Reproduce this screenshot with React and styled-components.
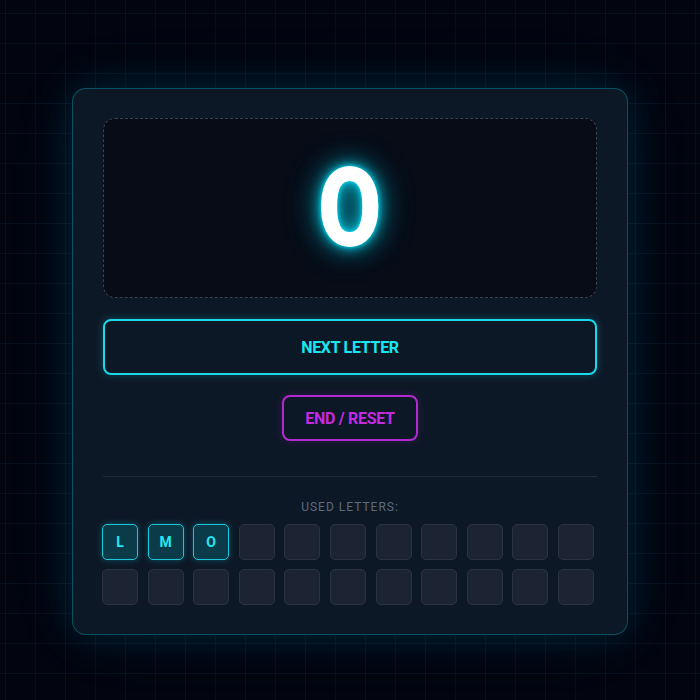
import React from "react";
import styled, { createGlobalStyle } from "styled-components";

const Global = createGlobalStyle`
  html, body { margin: 0; padding: 0; background: #020510; }
  body { font-family: Roboto, "Noto Sans", sans-serif; }
`;

const Page = styled.div`
  width: 700px;
  height: 700px;
  box-sizing: border-box;
  padding-top: 88px;
  display: flex;
  justify-content: center;
  align-items: flex-start;
  background-color: #020510;
  background-image:
    linear-gradient(rgba(40, 90, 130, 0.12) 1px, transparent 1px),
    linear-gradient(90deg, rgba(40, 90, 130, 0.12) 1px, transparent 1px);
  background-size: 30px 30px;
  background-position: 5px 13px;
`;

const Card = styled.div`
  width: 556px;
  box-sizing: border-box;
  padding: 29px 30px 29px;
  background: #0d1826;
  border: 1px solid rgba(0, 200, 230, 0.32);
  border-radius: 14px;
  box-shadow: 0 0 40px rgba(0, 200, 230, 0.15), 0 0 80px rgba(0, 150, 200, 0.06);
  display: flex;
  flex-direction: column;
`;

const Display = styled.div`
  height: 180px;
  box-sizing: border-box;
  border: 1.5px dashed #3a4451;
  border-radius: 12px;
  background: #070c17;
  display: flex;
  align-items: center;
  justify-content: center;
`;

const BigLetter = styled.span`
  font-family: Roboto, sans-serif;
  font-weight: 900;
  font-size: 112px;
  line-height: 1;
  color: #ffffff;
  display: inline-block;
  transform: scaleX(0.82);
  text-shadow: 0 0 6px rgba(0, 229, 255, 0.95), 0 0 14px rgba(0, 229, 255, 0.8),
    0 0 28px rgba(0, 229, 255, 0.55), 0 0 44px rgba(0, 229, 255, 0.3);
`;

const NextButton = styled.button`
  margin-top: 21px;
  height: 56px;
  width: 100%;
  box-sizing: border-box;
  background: transparent;
  border: 2px solid #1ad9e8;
  border-radius: 8px;
  color: #18e6f2;
  font-family: Roboto, sans-serif;
  font-weight: 700;
  font-size: 16px;
  letter-spacing: -0.3px;
  box-shadow: 0 0 8px rgba(0, 229, 255, 0.25);
  cursor: pointer;
`;

const ResetButton = styled.button`
  margin: 20px auto 0;
  height: 46px;
  width: 136px;
  box-sizing: border-box;
  background: transparent;
  border: 2px solid #b12ad0;
  border-radius: 8px;
  color: #c42be0;
  font-family: Roboto, sans-serif;
  font-weight: 700;
  font-size: 16px;
  letter-spacing: -0.3px;
  box-shadow: 0 0 8px rgba(190, 40, 220, 0.2);
  cursor: pointer;
`;

const Divider = styled.div`
  margin-top: 35px;
  height: 1px;
  background: #1f2b3b;
`;

const Label = styled.div`
  margin-top: 23px;
  text-align: center;
  font-family: Roboto, sans-serif;
  font-size: 12px;
  line-height: 14px;
  letter-spacing: 1px;
  color: #5d6b7f;
`;

const Tiles = styled.div`
  margin-top: 10px;
  margin-left: -1px;
  display: grid;
  grid-template-columns: repeat(11, 36px);
  column-gap: 9.6px;
  row-gap: 8.5px;
`;

const Tile = styled.div`
  width: 36px;
  height: 36px;
  box-sizing: border-box;
  border-radius: 5px;
  display: flex;
  align-items: center;
  justify-content: center;
  font-family: Roboto, sans-serif;
  font-weight: 700;
  font-size: 14px;
  background: ${(p) => (p.$used ? "#0b3a48" : "#1c2433")};
  border: 1px solid ${(p) => (p.$used ? "#1cc8d8" : "#2a3342")};
  color: #22e8f4;
  box-shadow: ${(p) => (p.$used ? "0 0 6px rgba(0,229,255,0.3)" : "none")};
`;

const used = ["L", "M", "O"];

export default function App() {
  const tiles = Array.from({ length: 22 }, (_, i) => used[i] || "");
  return (
    <>
      <Global />
      <Page>
        <Card>
          <Display>
            <BigLetter>O</BigLetter>
          </Display>
          <NextButton>NEXT LETTER</NextButton>
          <ResetButton>END / RESET</ResetButton>
          <Divider />
          <Label>USED LETTERS:</Label>
          <Tiles>
            {tiles.map((t, i) => (
              <Tile key={i} $used={!!t}>
                {t}
              </Tile>
            ))}
          </Tiles>
        </Card>
      </Page>
    </>
  );
}
